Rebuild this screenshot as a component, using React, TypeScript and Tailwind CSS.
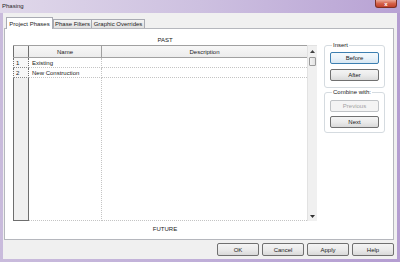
const btn =
  "h-[13px] w-[42px] flex items-center justify-center rounded-[2px] border border-[#707070] bg-gradient-to-b from-[#f4f4f4] via-[#ebebeb] to-[#d9d9d9] text-[6px] leading-none text-[#1a1a1a]";
const sideBtn =
  "h-[12px] w-[49px] flex items-center justify-center rounded-[2px] border text-[6px] leading-none";

function Group({ label, children, className }: { label: string; children: React.ReactNode; className?: string }) {
  return (
    <fieldset className={"border border-[#d5dbe0] rounded-[3px] px-[5px] " + (className ?? "")}>
      <legend className="ml-[2px] px-[1px] text-[6px] leading-[7px] text-[#1a1a1a]">{label}</legend>
      {children}
    </fieldset>
  );
}

export default function App() {
  return (
    <div className="w-[400px] h-[262px] flex flex-col overflow-hidden bg-gradient-to-r from-[#c9bbdc] via-[#bfaed8] to-[#b49dd1] font-['Liberation_Sans',Arial,sans-serif] text-[#1a1a1a]">
      {/* Title bar */}
      <div className="h-[13px] shrink-0 flex items-start bg-gradient-to-r from-[#e0d8ea] via-[#cdc0e0] to-[#b8a2d4]">
        <span className="pl-[2px] pt-[3px] text-[6px] leading-[7px] text-[#1e1e1e]">Phasing</span>
        <div className="ml-auto mr-[3px] w-[22px] h-[8px] rounded-b-[3px] border border-t-0 border-[#7e2f22] bg-gradient-to-b from-[#e9a898] via-[#d4614a] to-[#c2402a] flex items-center justify-center text-white text-[6px] font-bold leading-none">
          x
        </div>
      </div>

      {/* Body */}
      <div className="flex-1 mx-[3px] mb-[3px] bg-[#f0f0f0] flex flex-col">
        {/* Tabs */}
        <div className="h-[15px] shrink-0 flex items-end pl-[3px]">
          <div className="relative z-10 -mb-px h-[12px] w-[47px] bg-white border border-b-0 border-[#a9abb3] flex items-center justify-center text-[6px] leading-none">
            Project Phases
          </div>
          <div className="h-[9px] w-[39px] bg-gradient-to-b from-[#f4f4f4] to-[#e1e1e1] border border-b-0 border-[#a9abb3] flex items-center justify-center text-[6px] leading-none">
            Phase Filters
          </div>
          <div className="h-[9px] w-[53px] bg-gradient-to-b from-[#f4f4f4] to-[#e1e1e1] border border-b-0 border-l-0 border-[#a9abb3] flex items-center justify-center text-[6px] leading-none">
            Graphic Overrides
          </div>
        </div>

        {/* Panel */}
        <div className="h-[212px] shrink-0 ml-[1px] mr-[3px] bg-white border border-[#b5b7bd] flex pl-[8px]">
          {/* Left: grid */}
          <div className="w-[304px] flex flex-col">
            <div className="h-[16px] pt-[5px] flex items-center justify-center text-[6px] leading-none">PAST</div>
            <div className="h-[176px] flex">
              <div className="flex-1 flex flex-col">
                {/* header */}
                <div className="h-[13px] flex border-t border-b border-[#a0a0a0] bg-gradient-to-b from-[#f7f7f7] to-[#ececec]">
                  <div className="w-[16px] border-l border-r border-[#6e6e6e]" />
                  <div className="w-[73px] border-r border-[#a0a0a0] flex items-center justify-center text-[6px] leading-none">Name</div>
                  <div className="flex-1 flex items-center justify-center text-[6px] leading-none">Description</div>
                </div>
                {/* rows */}
                {[
                  ["1", "Existing"],
                  ["2", "New Construction"],
                ].map(([n, name]) => (
                  <div key={n} className="h-[10px] flex">
                    <div className="w-[16px] border-l border-r border-[#6e6e6e] bg-[#f7f7f7] border-b border-b-[#8a8a8a] border-dotted flex items-center pl-[2px] text-[6px] leading-none">
                      {n}
                    </div>
                    <div className="w-[73px] border-r border-b border-dotted border-[#c4c4c4] flex items-center pl-[3px] text-[6px] leading-none">
                      {name}
                    </div>
                    <div className="flex-1 border-b border-dotted border-[#c4c4c4]" />
                  </div>
                ))}
                {/* filler */}
                <div className="flex-1 flex">
                  <div className="w-[16px] border-l border-r border-b border-[#6e6e6e] bg-[#f0f0f0]" />
                  <div className="w-[73px] border-r border-b border-dotted border-[#c4c4c4]" />
                  <div className="flex-1 border-b border-dotted border-[#c4c4c4]" />
                </div>
              </div>
              {/* scrollbar */}
              <div className="w-[10px] flex flex-col bg-[#f0f0f0] border-t border-l border-[#e2e2e2]">
                <div className="h-[11px] flex items-center justify-center">
                  <svg width="5" height="3" viewBox="0 0 5 3"><path d="M0 3L2.5 0L5 3Z" fill="#404040" /></svg>
                </div>
                <div className="h-[9px] mx-[1px] rounded-[1px] border border-[#9a9a9a] bg-gradient-to-r from-[#f3f3f3] to-[#e2e2e2]" />
                <div className="flex-1" />
                <div className="h-[10px] flex items-center justify-center">
                  <svg width="5" height="3" viewBox="0 0 5 3"><path d="M0 0L2.5 3L5 0Z" fill="#303030" /></svg>
                </div>
              </div>
            </div>
            <div className="h-[15px] flex items-center justify-center text-[6px] leading-none">FUTURE</div>
          </div>

          {/* Right column */}
          <div className="ml-[7px] w-[61px] pt-[13px] flex flex-col">
            <Group label="Insert" className="pb-[6px]">
              <div className={sideBtn + " mt-[3px] border-[#3c7fb1] bg-gradient-to-b from-[#f4f9fc] via-[#eaf3fa] to-[#d8e7f2] text-[#1a1a1a]"}>Before</div>
              <div className={sideBtn + " mt-[5px] border-[#707070] bg-gradient-to-b from-[#f4f4f4] via-[#ebebeb] to-[#d9d9d9] text-[#1a1a1a]"}>After</div>
            </Group>
            <Group label="Combine with:" className="mt-[1px] pb-[4px]">
              <div className={sideBtn + " mt-[4px] border-[#c0c3c6] bg-[#f4f4f4] text-[#a3a3a3]"}>Previous</div>
              <div className={sideBtn + " mt-[4px] border-[#707070] bg-gradient-to-b from-[#f4f4f4] via-[#ebebeb] to-[#d9d9d9] text-[#1a1a1a]"}>Next</div>
            </Group>
          </div>
        </div>

        {/* Bottom buttons */}
        <div className="flex justify-end gap-[3px] pt-[3px] pr-[3px]">
          <div className={btn}>OK</div>
          <div className={btn}>Cancel</div>
          <div className={btn}>Apply</div>
          <div className={btn}>Help</div>
        </div>
      </div>
    </div>
  );
}
